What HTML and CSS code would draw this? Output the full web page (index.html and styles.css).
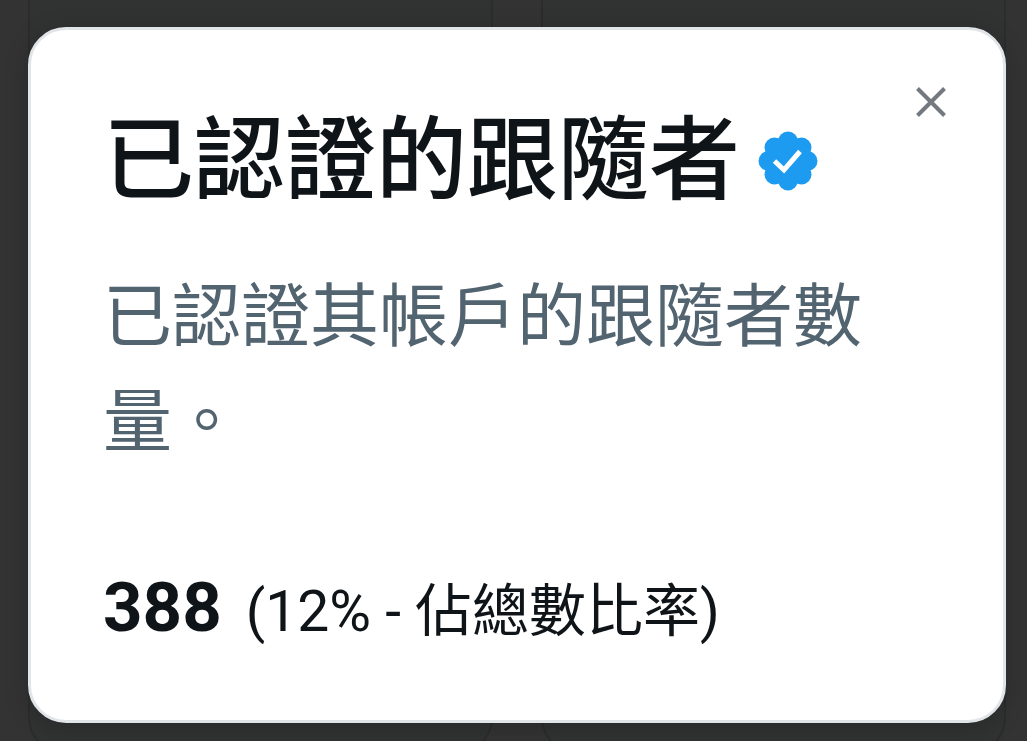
FILE: index.html
```html
<!DOCTYPE html>
<html lang="zh-Hant">
  <head>
    <meta charset="UTF-8" />
    <meta name="viewport" content="width=device-width, initial-scale=1.0" />
    <title>已認證的跟隨者</title>
    <link rel="stylesheet" href="styles.css">
  </head>
  <body>
    <div class="backdrop" aria-hidden="true">
      <div class="panel"></div>
      <div class="panel"></div>
    </div>
    <main class="overlay">
      <section class="dialog" role="dialog" aria-labelledby="dialog-title">
        <button class="close" type="button" aria-label="關閉">
          <svg viewBox="0 0 30 30" aria-hidden="true">
            <path d="M1.5 1.5 28.5 28.5M28.5 1.5 1.5 28.5" />
          </svg>
        </button>
        <div class="heading">
          <h1 id="dialog-title">已認證的跟隨者</h1>
          <svg class="badge" viewBox="0 0 60 60" aria-hidden="true">
            <g class="badge-shape">
              <circle cx="30" cy="30" r="23.5" />
              <circle cx="30" cy="10.5" r="10" />
              <circle cx="43.5" cy="16.5" r="10" />
              <circle cx="49.5" cy="30" r="10" />
              <circle cx="43.5" cy="43.5" r="10" />
              <circle cx="30" cy="49.5" r="10" />
              <circle cx="16.5" cy="43.5" r="10" />
              <circle cx="10.5" cy="30" r="10" />
              <circle cx="16.5" cy="16.5" r="10" />
            </g>
            <path class="badge-check" d="M16.5 30 26 39 42 20.5" />
          </svg>
        </div>
        <p class="description">已認證其帳戶的跟隨者數量。</p>
        <p class="stat"><strong>388</strong><span>(12% - 佔總數比率)</span></p>
      </section>
    </main>
  </body>
</html>
```

FILE: styles.css
```css
:root {
  --text: #0f1419;
  --muted: #536471;
  --blue: #1d9bf0;
  --border: #e1e5e8;
}
* {
  box-sizing: border-box;
}
body {
  margin: 0;
  min-height: 100vh;
  position: relative;
  overflow: hidden;
  background-color: #333333;
  color: var(--text);
  font-family: Roboto, "Noto Sans CJK TC", sans-serif;
}
.backdrop {
  position: absolute;
  inset: -60px 21px -14px 28px;
  display: grid;
  grid-template-columns: 1fr 1fr;
  gap: 48px;
}
.panel {
  background-color: #313333;
  border: 2px solid #2b2d2d;
  border-radius: 38px;
}
.overlay {
  position: relative;
  padding: 27px 21px 18px 28px;
}
.dialog {
  position: relative;
  padding: 72px 72px 58px;
  background-color: #ffffff;
  border: 3px solid var(--border);
  border-radius: 38px;
  box-shadow: 0 4px 24px rgba(0, 0, 0, 0.2);
}
.close {
  position: absolute;
  top: 56px;
  right: 56px;
  width: 32px;
  height: 32px;
  padding: 1px;
  border: 0;
  background: none;
  cursor: pointer;
}
.close svg {
  display: block;
  width: 30px;
  height: 30px;
  fill: none;
  stroke: #73797e;
  stroke-width: 4;
}
.heading {
  display: flex;
  align-items: center;
  gap: 18px;
}
h1 {
  margin: 0;
  font-size: 91px;
  font-weight: 500;
  line-height: 118px;
}
.badge {
  width: 60px;
  height: 60px;
}
.badge-shape {
  fill: var(--blue);
}
.badge-check {
  fill: none;
  stroke: #ffffff;
  stroke-width: 5;
}
.description {
  margin: 45px 0 0;
  color: var(--muted);
  font-size: 69px;
  line-height: 105px;
}
.stat {
  display: flex;
  align-items: baseline;
  gap: 24px;
  margin: 83px 0 0;
  font-size: 57px;
  line-height: 100px;
}
.stat strong {
  font-size: 69px;
  font-weight: 700;
}
```
